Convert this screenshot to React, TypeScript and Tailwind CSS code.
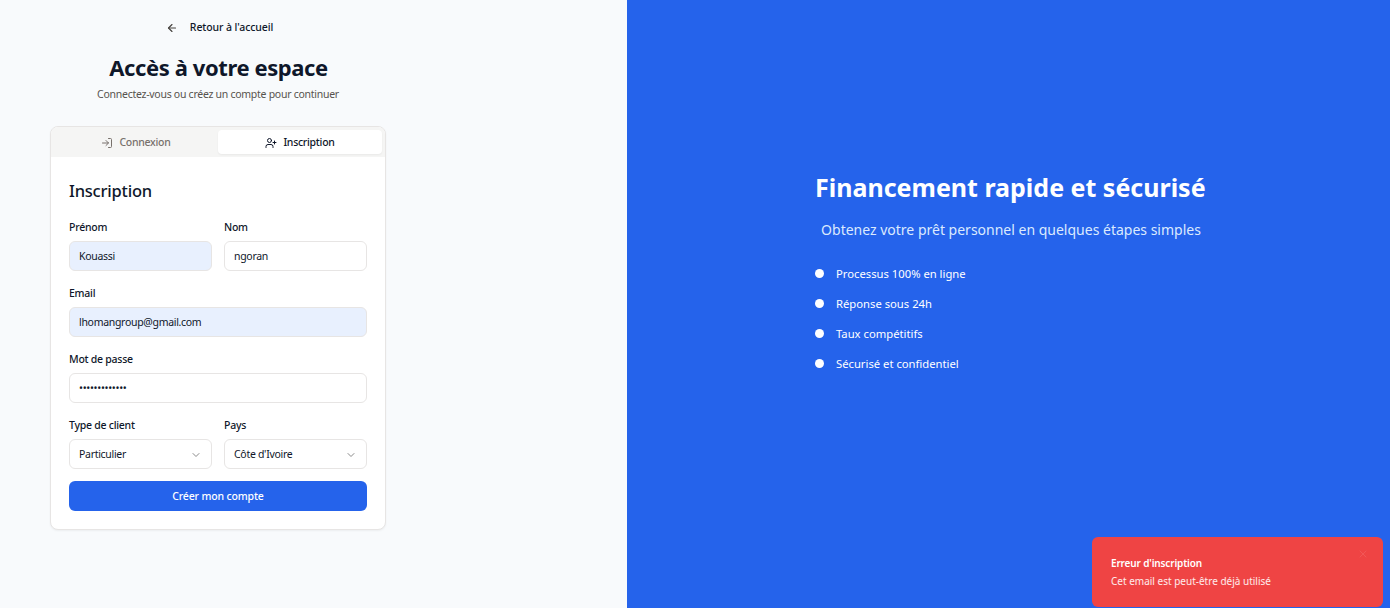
import { ArrowLeft, ChevronDown, LogIn, UserPlus, X } from "lucide-react";

const features = [
  "Processus 100% en ligne",
  "Réponse sous 24h",
  "Taux compétitifs",
  "Sécurisé et confidentiel",
];

const Label = ({ children }: { children: string }) => (
  <div className="mb-[6px] text-[10.5px] tracking-[-0.25px] leading-[16px] font-medium text-[#0f172a]">{children}</div>
);

const Field = ({ label, value, filled }: { label: string; value: string; filled?: boolean }) => (
  <div className="flex-1 min-w-0">
    <Label>{label}</Label>
    <div
      className={`h-[30px] rounded-[6px] border border-[#e7e5e4] flex items-center px-[9px] pt-[1px] text-[10.5px] tracking-[-0.3px] text-[#0f172a] ${
        filled ? "bg-[#e8f0fe]" : "bg-white"
      }`}
    >
      {value}
    </div>
  </div>
);

const SelectField = ({ label, value }: { label: string; value: string }) => (
  <div className="flex-1 min-w-0">
    <Label>{label}</Label>
    <div className="h-[30px] rounded-[6px] border border-[#e7e5e4] bg-white flex items-center justify-between px-[9px] pt-[1px] text-[10.5px] tracking-[-0.3px] text-[#0f172a]">
      <span>{value}</span>
      <ChevronDown size={12} className="text-[#8a8a8a]" />
    </div>
  </div>
);

export default function App() {
  return (
    <div className="flex h-[608px] w-[1390px] overflow-hidden font-['Noto_Sans',sans-serif]">
      {/* left side: form */}
      <div className="w-[627px] bg-[#f8fafc] pl-[50px] pt-[20px]">
        <div className="w-[336px]">
          <div className="flex items-center justify-center gap-[12px] h-[16px] pl-[3px] text-[10.5px] tracking-[-0.1px] font-medium text-[#0f172a]">
            <ArrowLeft size={12} strokeWidth={2.25} className="text-[#44403c]" />
            <span>Retour à l'accueil</span>
          </div>

          <h1 className="mt-[15px] pl-[1px] text-center text-[22px] tracking-[-0.4px] leading-[32px] font-bold text-[#0f172a]">
            Accès à votre espace
          </h1>
          <p className="mt-[3px] text-center text-[10.5px] tracking-[-0.27px] leading-[16px] text-[#57534e]">
            Connectez-vous ou créez un compte pour continuer
          </p>

          <div className="mt-[24px] rounded-[8px] border border-[#e7e5e4] bg-white shadow-xs overflow-hidden">
            <div className="h-[30px] bg-[#f5f5f4] flex items-center px-[3px] pr-[3px]">
              <div className="flex-1 h-[24px] pt-[1px] flex items-center justify-center gap-[6px] text-[10.5px] tracking-[-0.27px] font-medium text-[#78716c]">
                <LogIn size={12} />
                <span>Connexion</span>
              </div>
              <div className="flex-1 h-[24px] pt-[1px] rounded-[4px] bg-white shadow-xs flex items-center justify-center gap-[6px] text-[10.5px] tracking-[-0.27px] font-medium text-[#0f172a]">
                <UserPlus size={12} />
                <span>Inscription</span>
              </div>
            </div>

            <div className="px-[18px] pt-[22px] pb-[18px]">
              <h2 className="text-[16.5px] tracking-[-0.2px] leading-[24px] font-medium text-[#0f172a] mb-[16px]">Inscription</h2>
              <div className="flex gap-[12px]">
                <Field label="Prénom" value="Kouassi" filled />
                <Field label="Nom" value="ngoran" />
              </div>
              <div className="mt-[14px]">
                <Field label="Email" value="lhomangroup@gmail.com" filled />
              </div>
              <div className="mt-[14px]">
                <Field label="Mot de passe" value="•••••••••••••" />
              </div>
              <div className="flex gap-[12px] mt-[14px]">
                <SelectField label="Type de client" value="Particulier" />
                <SelectField label="Pays" value="Côte d'Ivoire" />
              </div>
              <button className="mt-[12px] w-full h-[30px] pt-[1px] rounded-[6px] bg-[#2563eb] text-white text-[10.5px] tracking-[-0.15px] font-medium">
                Créer mon compte
              </button>
            </div>
          </div>
        </div>
      </div>

      {/* right side: blue panel */}
      <div className="relative flex-1 bg-[#2563eb] pt-[170px] pl-[188px] text-white">
        <h2 className="text-[25px] leading-[34px] font-bold w-[392px] whitespace-nowrap">Financement rapide et sécurisé</h2>
        <p className="mt-[16px] w-[392px] text-center text-[14px] leading-[20px] text-[#dbeafe]">
          Obtenez votre prêt personnel en quelques étapes simples
        </p>
        <ul className="mt-[26px] flex flex-col gap-[14px]">
          {features.map((f) => (
            <li key={f} className="flex items-center gap-[12px] h-[16px] text-[11.25px]">
              <span className="w-[9px] h-[9px] rounded-full bg-white -mt-[2px]" />
              <span>{f}</span>
            </li>
          ))}
        </ul>

        {/* toast */}
        <div className="absolute right-[7px] bottom-[1px] w-[291px] h-[70px] rounded-[6px] bg-[#ef4444] px-[19px] pt-[18px] text-white">
          <X size={12} className="absolute right-[14px] top-[11px] text-white/10" />
          <div className="text-[10px] tracking-[-0.15px] leading-[16px] font-semibold">Erreur d'inscription</div>
          <div className="mt-[2px] text-[10px] leading-[16px] text-white/90">Cet email est peut-être déjà utilisé</div>
        </div>
      </div>
    </div>
  );
}
